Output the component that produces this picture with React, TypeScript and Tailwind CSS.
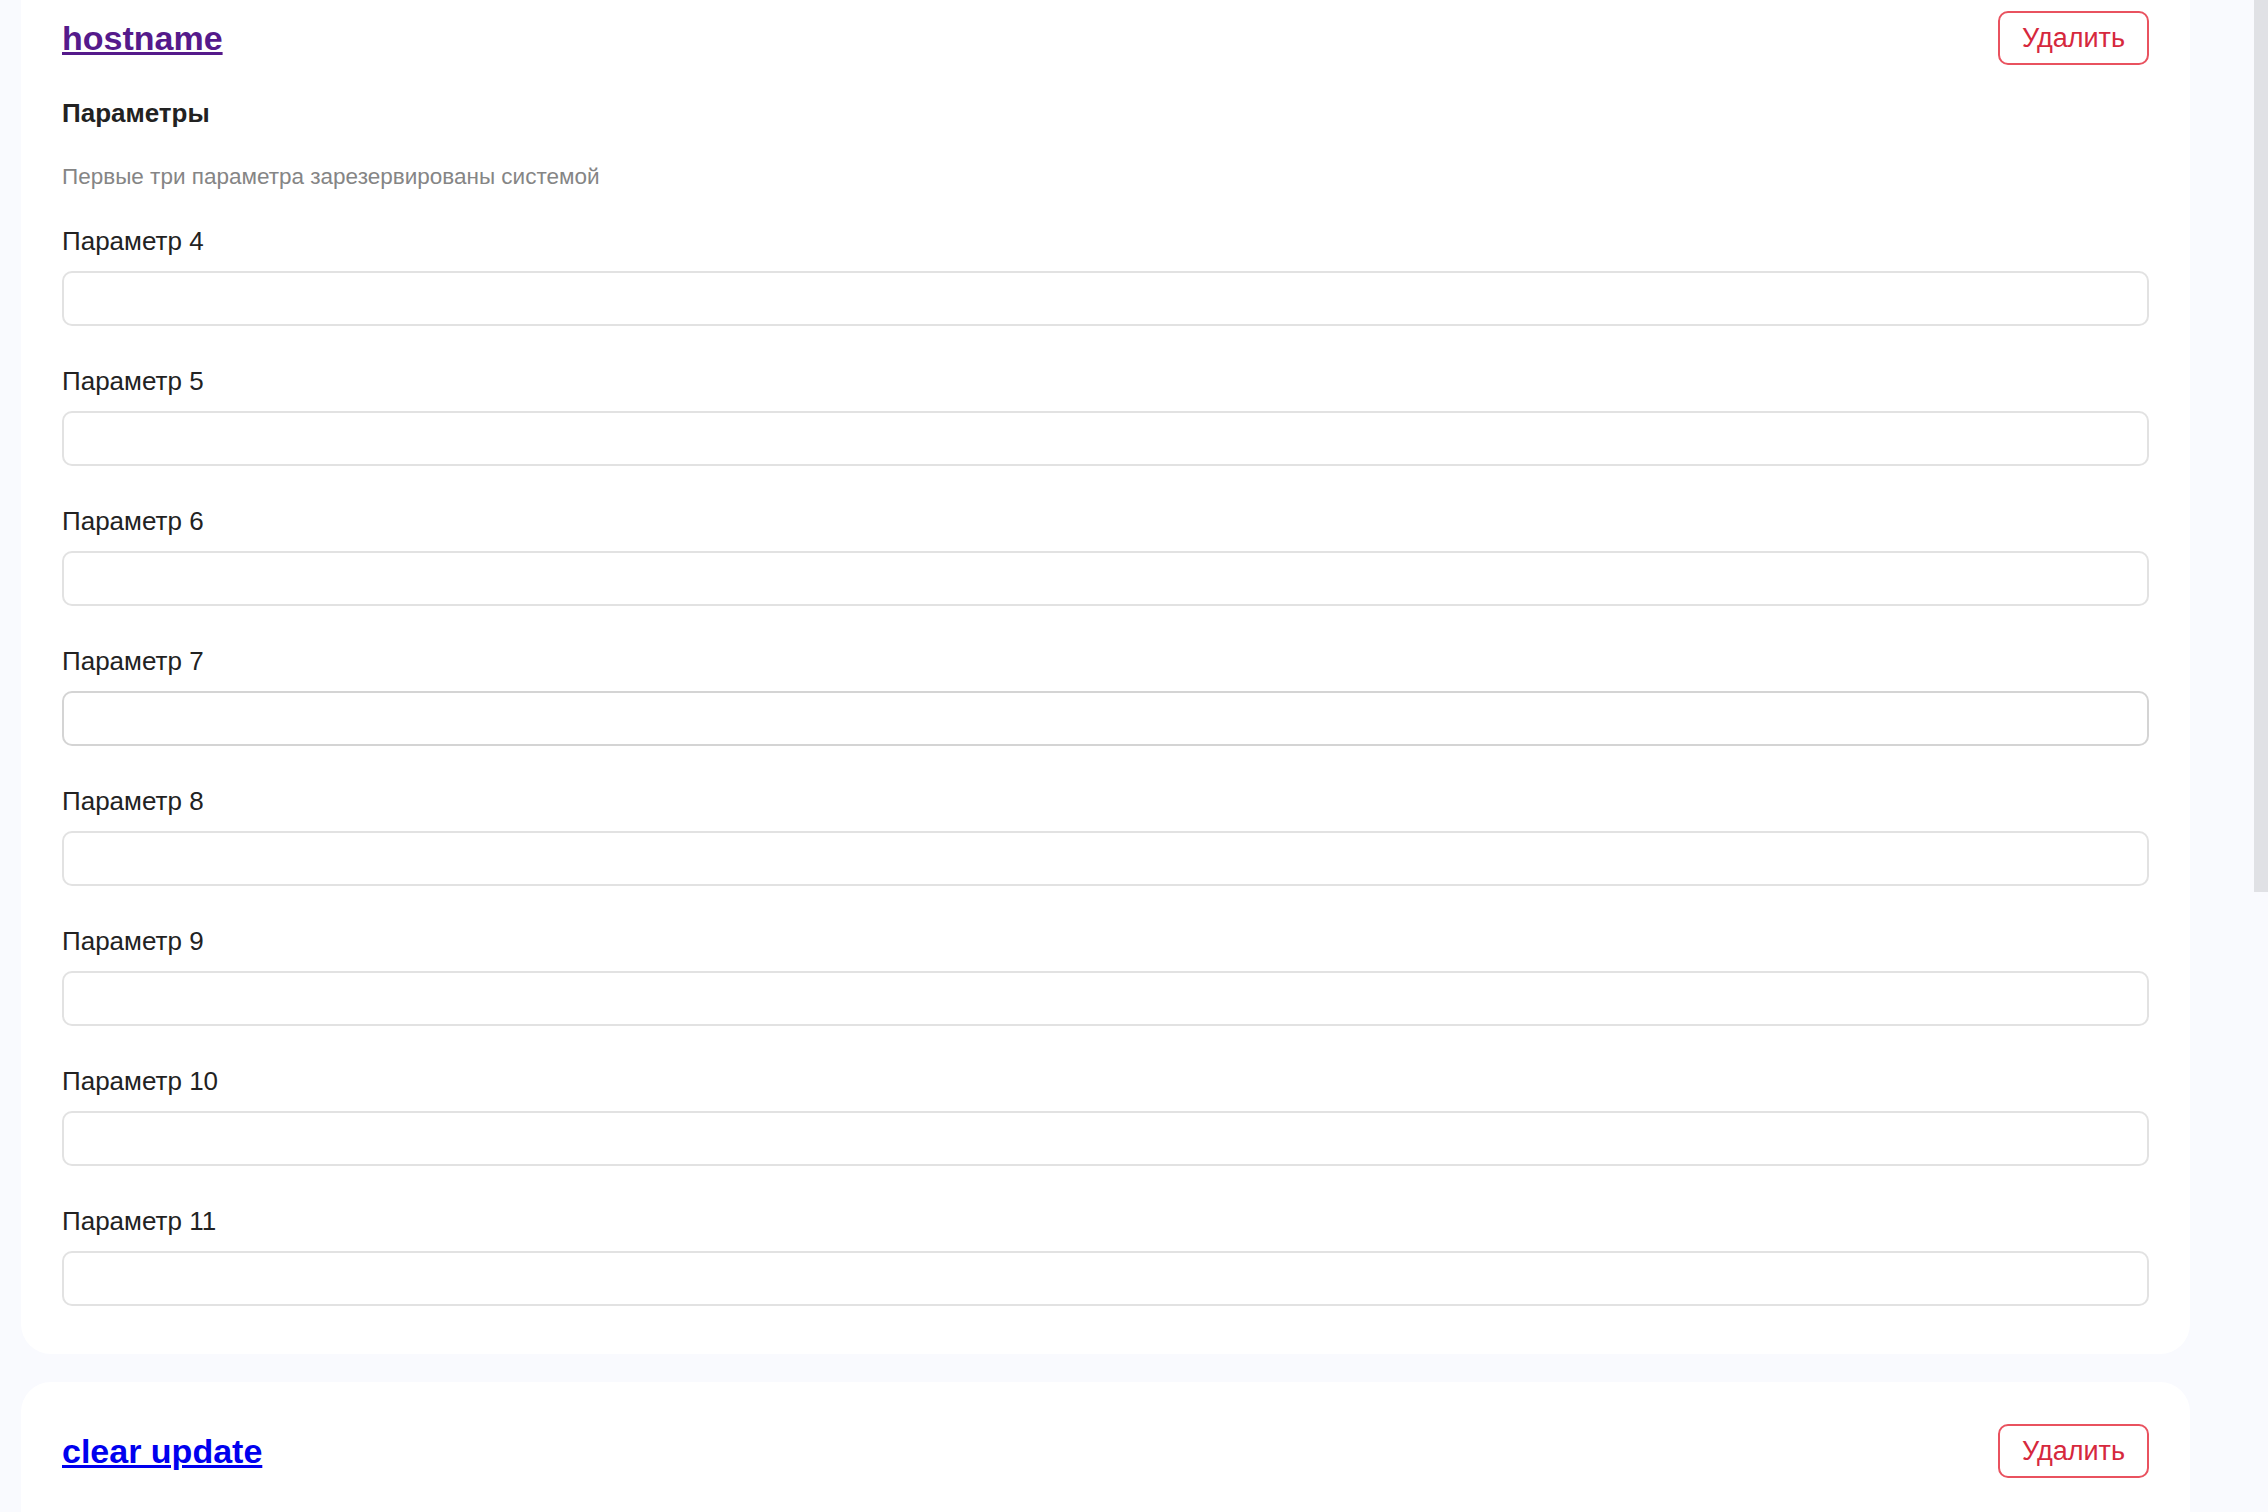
import type { FC } from "react";

const font = { fontFamily: '"Liberation Sans", Arial, sans-serif' };

const Field: FC<{ label: string; hovered?: boolean }> = ({ label, hovered }) => (
  <div className="flex flex-col">
    <label className="mb-[16px] block text-[26px] leading-[28px] text-[#222222]">{label}</label>
    <input
      type="text"
      className={
        hovered
          ? "h-[55px] w-full rounded-[10px] border-2 border-[#d4d4d4] bg-white px-4 outline-none"
          : "h-[55px] w-full rounded-[10px] border-2 border-[#e2e2e2] bg-white px-4 outline-none"
      }
    />
  </div>
);

const ScriptCard: FC<{ name: string; visited?: boolean; params: Array<number> }> = ({
  name,
  visited,
  params,
}) => (
  <section className="rounded-[30px] bg-white px-[41px] pt-[42px] pb-[48px]">
    <div className="flex h-[54px] flex-row items-center justify-between">
      <a
        href="#"
        className={
          visited
            ? "text-[34px] font-bold leading-[40px] text-[#551a8b] underline"
            : "text-[34px] font-bold leading-[40px] text-[#0000ee] underline"
        }
      >
        {name}
      </a>
      <button className="h-[54px] w-[151px] rounded-[10px] border-2 border-[#e9525f] bg-white text-[27px] text-[#d6283d]">
        Удалить
      </button>
    </div>
    <h3 className="mt-[34px] text-[26px] font-bold leading-[28px] text-[#222222]">Параметры</h3>
    <p className="mt-[38px] text-[22.5px] leading-[24px] text-[#858585]">
      Первые три параметра зарезервированы системой
    </p>
    <div className="mt-[38px] flex flex-col gap-[41px]">
      {params.map((n) => (
        <Field key={n} label={`Параметр ${n}`} hovered={visited && n === 7} />
      ))}
    </div>
  </section>
);

const App: FC = () => (
  <div style={font} className="min-h-screen overflow-hidden bg-[#f9fafe]">
    <div className="-mt-[31px] flex flex-col gap-[28px] pl-[21px] pr-[78px] pb-[75px]">
      <ScriptCard name="hostname" visited params={[4, 5, 6, 7, 8, 9, 10, 11]} />
      <ScriptCard name="clear update" params={[4, 5, 6, 7, 8, 9]} />
    </div>
    {/* scrollbar thumb, drawn over the page */}
    <div className="fixed top-0 right-0 h-[892px] w-[14px] bg-[#e0e1e5]" />
  </div>
);

export default App;
